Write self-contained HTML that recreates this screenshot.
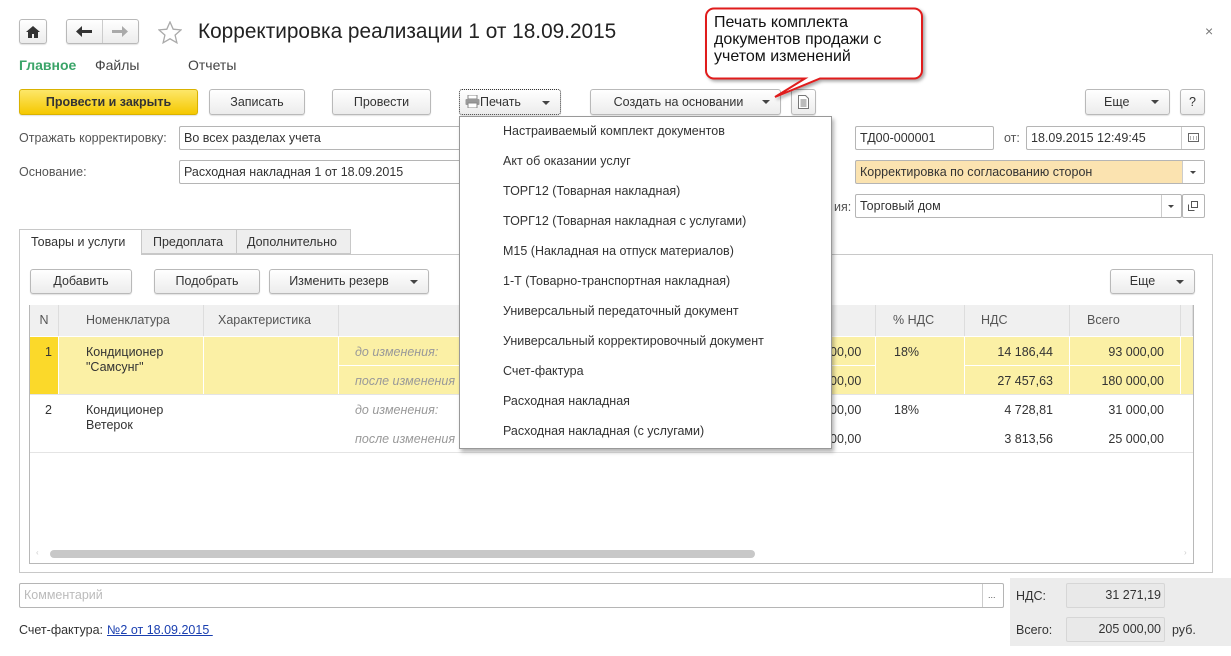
<!DOCTYPE html>
<html><head><meta charset="utf-8">
<style>
*{box-sizing:border-box;margin:0;padding:0}
body{width:1231px;height:656px;background:#fff;font-family:"Liberation Sans",Arial,sans-serif;font-size:12.5px;color:#333;position:relative;overflow:hidden}
.a{position:absolute;white-space:nowrap}
.btn{position:absolute;border:1px solid #b9b9b9;border-radius:3px;background:linear-gradient(#fff,#ececec);text-align:center;color:#333;box-shadow:0 1px 1px rgba(0,0,0,.12)}
.inp{position:absolute;border:1px solid #b5b5b5;border-radius:2px;background:#fff;padding-left:4px;color:#333}
.tri{display:inline-block;width:0;height:0;border-left:4px solid transparent;border-right:4px solid transparent;border-top:4px solid #444;vertical-align:middle}
.th{position:absolute;top:305px;height:31px;line-height:31px;background:#f0f0f0;border-right:1px solid #ddd;color:#555;padding-left:10px}
.mi{position:absolute;left:503px;color:#333}
.it{color:#999;font-style:italic}
.num{position:absolute;text-align:right}
</style></head><body>

<!-- top nav -->
<div class="btn" style="left:19px;top:19px;width:28px;height:25px"><svg width="14" height="12" style="margin-top:6px" viewBox="0 0 14 12"><path d="M7 0L0 6h2v6h4V8h2v4h4V6h2z" fill="#333"/></svg></div>
<div class="btn" style="left:66px;top:19px;width:73px;height:25px"></div>
<div class="a" style="left:102px;top:20px;width:1px;height:23px;background:#ccc"></div>
<svg class="a" style="left:76px;top:26px" width="16" height="11" viewBox="0 0 16 11"><path d="M0 5.5L6 0v4h10v3H6v4z" fill="#333"/></svg>
<svg class="a" style="left:112px;top:26px" width="16" height="11" viewBox="0 0 16 11"><path d="M16 5.5L10 0v4H0v3h10v4z" fill="#aaa"/></svg>
<svg class="a" style="left:158px;top:21px" width="24" height="23" viewBox="0 0 24 23"><path d="M12 1l3.2 7.2 7.8.7-5.9 5.2 1.8 7.7L12 17.8 5.1 21.8l1.8-7.7L1 8.9l7.8-.7z" fill="none" stroke="#aaa" stroke-width="1.3"/></svg>
<div class="a" style="left:198px;top:20px;font-size:20.8px;color:#222">Корректировка реализации 1 от 18.09.2015</div>
<div class="a" style="left:1205px;top:23px;font-size:14px;color:#777">×</div>

<div class="a" style="left:19px;top:57px;font-size:14px;color:#3aa468;font-weight:bold">Главное</div>
<div class="a" style="left:95px;top:57px;font-size:14px;color:#444">Файлы</div>
<div class="a" style="left:188px;top:57px;font-size:14px;color:#444">Отчеты</div>

<!-- command bar -->
<div class="btn" style="left:19px;top:89px;width:179px;height:26px;line-height:24px;background:linear-gradient(#fde76a,#f5c800);border-color:#d9b200;font-weight:bold;color:#333">Провести и закрыть</div>
<div class="btn" style="left:209px;top:89px;width:96px;height:26px;line-height:24px">Записать</div>
<div class="btn" style="left:332px;top:89px;width:99px;height:26px;line-height:24px">Провести</div>
<div class="btn" style="left:459px;top:89px;width:102px;height:26px;line-height:24px;border:1px dotted #333;text-align:left;padding-left:5px"><svg width="15" height="13" viewBox="0 0 15 13" style="vertical-align:-2px"><rect x="3" y="0" width="9" height="4" fill="#fff" stroke="#888"/><rect x="0.5" y="4" width="14" height="6" rx="1" fill="#999"/><rect x="3" y="8" width="9" height="5" fill="#fff" stroke="#888"/></svg>Печать <span class="tri" style="margin-left:18px"></span></div>
<div class="btn" style="left:590px;top:89px;width:191px;height:26px;line-height:24px;padding-right:14px">Создать на основании<span class="tri" style="position:absolute;right:10px;top:10px"></span></div>
<div class="btn" style="left:791px;top:89px;width:25px;height:26px"><svg width="11" height="14" viewBox="0 0 11 14" style="margin-top:5px"><path d="M.5.5h7l3 3v10H.5z" fill="#fff" stroke="#777"/><path d="M2.5 5h6M2.5 7h6M2.5 9h6M2.5 11h6" stroke="#777"/></svg></div>
<div class="btn" style="left:1085px;top:89px;width:85px;height:26px;line-height:24px;text-align:left;padding-left:18px">Еще<span class="tri" style="position:absolute;right:10px;top:10px"></span></div>
<div class="btn" style="left:1180px;top:89px;width:25px;height:26px;line-height:24px">?</div>

<!-- fields -->
<div class="a" style="left:19px;top:131px;color:#555">Отражать корректировку:</div>
<div class="inp" style="left:179px;top:126px;width:300px;height:24px;line-height:22px">Во всех разделах учета</div>
<div class="a" style="left:19px;top:165px;color:#555">Основание:</div>
<div class="inp" style="left:179px;top:160px;width:300px;height:24px;line-height:22px">Расходная накладная 1 от 18.09.2015</div>

<div class="inp" style="left:855px;top:126px;width:139px;height:24px;line-height:22px">ТД00-000001</div>
<div class="a" style="left:1004px;top:131px;color:#555">от:</div>
<div class="inp" style="left:1026px;top:126px;width:179px;height:24px;line-height:22px">18.09.2015 12:49:45</div>
<div class="a" style="left:1181px;top:127px;width:1px;height:22px;background:#ccc"></div>
<svg class="a" style="left:1188px;top:133px" width="11" height="9" viewBox="0 0 11 9"><rect x=".5" y=".5" width="10" height="8" fill="none" stroke="#666"/><path d="M2 4h1M5 4h1M8 4h1M2 6h1M5 6h1M8 6h1" stroke="#666"/></svg>

<div class="inp" style="left:855px;top:160px;width:350px;height:24px;line-height:22px;background:#fbe3b0">Корректировка по согласованию сторон</div>
<div class="a" style="left:1182px;top:161px;width:22px;height:22px;background:#fff;border-left:1px solid #ccc"></div>
<span class="tri a" style="left:1190px;top:171px;border-width:3px 3px 0;"></span>

<div class="a" style="left:834px;top:200px;color:#555">ия:</div>
<div class="inp" style="left:855px;top:194px;width:327px;height:24px;line-height:22px">Торговый дом</div>
<div class="a" style="left:1161px;top:195px;width:1px;height:22px;background:#ccc"></div>
<span class="tri a" style="left:1168px;top:205px;border-width:3px 3px 0;"></span>
<div class="inp" style="left:1182px;top:194px;width:23px;height:24px"></div>
<svg class="a" style="left:1188px;top:201px" width="10" height="10" viewBox="0 0 10 10"><path d="M3.5.5h6v6h-6zM.5 3.5v6h6" fill="none" stroke="#555"/></svg>

<!-- tabs -->
<div class="a" style="left:19px;top:254px;width:1194px;height:319px;border:1px solid #c8c8c8"></div>
<div class="a" style="left:19px;top:229px;width:123px;height:26px;border:1px solid #c8c8c8;border-bottom:none;background:#fff;line-height:25px;padding-left:11px">Товары и услуги</div>
<div class="a" style="left:141px;top:229px;width:96px;height:25px;border:1px solid #c8c8c8;background:#eee;line-height:24px;padding-left:11px">Предоплата</div>
<div class="a" style="left:236px;top:229px;width:115px;height:25px;border:1px solid #c8c8c8;background:#eee;line-height:24px;padding-left:10px">Дополнительно</div>

<div class="btn" style="left:30px;top:269px;width:102px;height:25px;line-height:23px">Добавить</div>
<div class="btn" style="left:154px;top:269px;width:106px;height:25px;line-height:23px">Подобрать</div>
<div class="btn" style="left:269px;top:269px;width:160px;height:25px;line-height:23px;padding-right:20px">Изменить резерв<span class="tri" style="position:absolute;right:10px;top:10px"></span></div>
<div class="btn" style="left:1110px;top:269px;width:85px;height:25px;line-height:23px;padding-right:20px">Еще<span class="tri" style="position:absolute;right:10px;top:10px"></span></div>

<!-- table -->
<div class="a" style="left:29px;top:305px;width:1165px;height:259px;border:1px solid #b8b8b8"></div>
<div class="th" style="left:30px;width:29px;text-align:center;padding:0">N</div>
<div class="th" style="left:59px;width:145px;padding-left:27px">Номенклатура</div>
<div class="th" style="left:204px;width:135px;padding-left:14px">Характеристика</div>
<div class="th" style="left:339px;width:537px"></div>
<div class="th" style="left:876px;width:89px;padding-left:17px">% НДС</div>
<div class="th" style="left:965px;width:105px;padding-left:16px">НДС</div>
<div class="th" style="left:1070px;width:111px;padding-left:17px">Всего</div>
<div class="th" style="left:1181px;width:12px"></div>

<div class="a" style="left:30px;top:337px;width:1163px;height:57px;background:#fbf0a5"></div>
<div class="a" style="left:30px;top:337px;width:28px;height:57px;background:#fbd92a"></div>
<div class="a" style="left:58px;top:337px;width:1px;height:57px;background:#fff"></div>
<div class="a" style="left:203px;top:337px;width:1px;height:57px;background:#fff"></div>
<div class="a" style="left:338px;top:337px;width:1px;height:57px;background:#fff"></div>
<div class="a" style="left:875px;top:337px;width:1px;height:57px;background:#fff"></div>
<div class="a" style="left:964px;top:337px;width:1px;height:57px;background:#fff"></div>
<div class="a" style="left:1069px;top:337px;width:1px;height:57px;background:#fff"></div>
<div class="a" style="left:1180px;top:337px;width:1px;height:57px;background:#fff"></div>
<div class="a" style="left:339px;top:365px;width:536px;height:1px;background:#fff"></div>
<div class="a" style="left:965px;top:365px;width:215px;height:1px;background:#fff"></div>
<div class="a" style="left:30px;top:394px;width:1163px;height:1px;background:#e4e4e4"></div>
<div class="a" style="left:30px;top:452px;width:1163px;height:1px;background:#e4e4e4"></div>

<div class="a" style="left:45px;top:345px">1</div>
<div class="a" style="left:86px;top:345px;line-height:15px">Кондиционер<br>"Самсунг"</div>
<div class="a it" style="left:355px;top:345px">до изменения:</div>
<div class="a it" style="left:355px;top:374px">после изменения</div>
<div class="a" style="left:830px;top:345px">00,00</div>
<div class="a" style="left:830px;top:374px">00,00</div>
<div class="a" style="left:894px;top:345px">18%</div>
<div class="num" style="left:965px;width:88px;top:345px">14 186,44</div>
<div class="num" style="left:965px;width:88px;top:374px">27 457,63</div>
<div class="num" style="left:1070px;width:94px;top:345px">93 000,00</div>
<div class="num" style="left:1070px;width:94px;top:374px">180 000,00</div>

<div class="a" style="left:45px;top:403px">2</div>
<div class="a" style="left:86px;top:403px;line-height:15px">Кондиционер<br>Ветерок</div>
<div class="a it" style="left:355px;top:403px">до изменения:</div>
<div class="a it" style="left:355px;top:432px">после изменения</div>
<div class="a" style="left:830px;top:403px">00,00</div>
<div class="a" style="left:830px;top:432px">00,00</div>
<div class="a" style="left:894px;top:403px">18%</div>
<div class="num" style="left:965px;width:88px;top:403px">4 728,81</div>
<div class="num" style="left:965px;width:88px;top:432px">3 813,56</div>
<div class="num" style="left:1070px;width:94px;top:403px">31 000,00</div>
<div class="num" style="left:1070px;width:94px;top:432px">25 000,00</div>

<div class="a" style="left:50px;top:550px;width:705px;height:8px;border-radius:4px;background:#c8c8c8"></div>
<div class="a" style="left:36px;top:548px;font-size:8px;color:#ccc">‹</div>
<div class="a" style="left:1184px;top:548px;font-size:8px;color:#ccc">›</div>

<!-- dropdown menu -->
<div class="a" style="left:459px;top:116px;width:373px;height:333px;background:#fff;border:1px solid #999;box-shadow:2px 3px 4px rgba(0,0,0,.3)"></div>
<div class="mi" style="top:124px">Настраиваемый комплект документов</div>
<div class="mi" style="top:154px">Акт об оказании услуг</div>
<div class="mi" style="top:184px">ТОРГ12 (Товарная накладная)</div>
<div class="mi" style="top:214px">ТОРГ12 (Товарная накладная с услугами)</div>
<div class="mi" style="top:244px">М15 (Накладная на отпуск материалов)</div>
<div class="mi" style="top:274px">1-Т (Товарно-транспортная накладная)</div>
<div class="mi" style="top:304px">Универсальный передаточный документ</div>
<div class="mi" style="top:334px">Универсальный корректировочный документ</div>
<div class="mi" style="top:364px">Счет-фактура</div>
<div class="mi" style="top:394px">Расходная накладная</div>
<div class="mi" style="top:424px">Расходная накладная (с услугами)</div>

<!-- bottom -->
<div class="inp" style="left:19px;top:583px;width:985px;height:25px;line-height:23px;color:#bbb">Комментарий</div>
<div class="a" style="left:982px;top:584px;width:1px;height:23px;background:#ccc"></div>
<div class="a" style="left:988px;top:590px;font-size:9px;color:#555">...</div>
<div class="a" style="left:19px;top:623px;color:#333">Счет-фактура:</div>
<div class="a" style="left:107px;top:623px;color:#1a3fb0;text-decoration:underline">№2 от 18.09.2015&nbsp;</div>

<div class="a" style="left:1010px;top:578px;width:221px;height:68px;background:#ececec"></div>
<div class="a" style="left:1016px;top:589px">НДС:</div>
<div class="a" style="left:1066px;top:583px;width:99px;height:25px;border:1px solid #d6d6d6;border-radius:2px;background:#e9e9e9;text-align:right;padding-right:3px;line-height:23px">31 271,19</div>
<div class="a" style="left:1016px;top:623px">Всего:</div>
<div class="a" style="left:1066px;top:617px;width:99px;height:25px;border:1px solid #d6d6d6;border-radius:2px;background:#e9e9e9;text-align:right;padding-right:3px;line-height:23px">205 000,00</div>
<div class="a" style="left:1172px;top:623px">руб.</div>

<!-- callout -->
<svg class="a" style="left:700px;top:5px" width="235" height="98" viewBox="0 0 235 98">
<defs><filter id="s"><feDropShadow dx="2" dy="2" stdDeviation="1.5" flood-opacity=".35"/></filter></defs>
<path d="M14 3.5h200a8 8 0 0 1 8 8v54a8 8 0 0 1-8 8H120L75 92l30-18.5H14a8 8 0 0 1-8-8v-54a8 8 0 0 1 8-8z" fill="#fff" stroke="#e01b1b" stroke-width="2" filter="url(#s)"/>
</svg>
<div class="a" style="left:714px;top:14px;font-size:16px;line-height:17px;color:#111">Печать комплекта<br>документов продажи с<br>учетом изменений</div>

</body></html>
